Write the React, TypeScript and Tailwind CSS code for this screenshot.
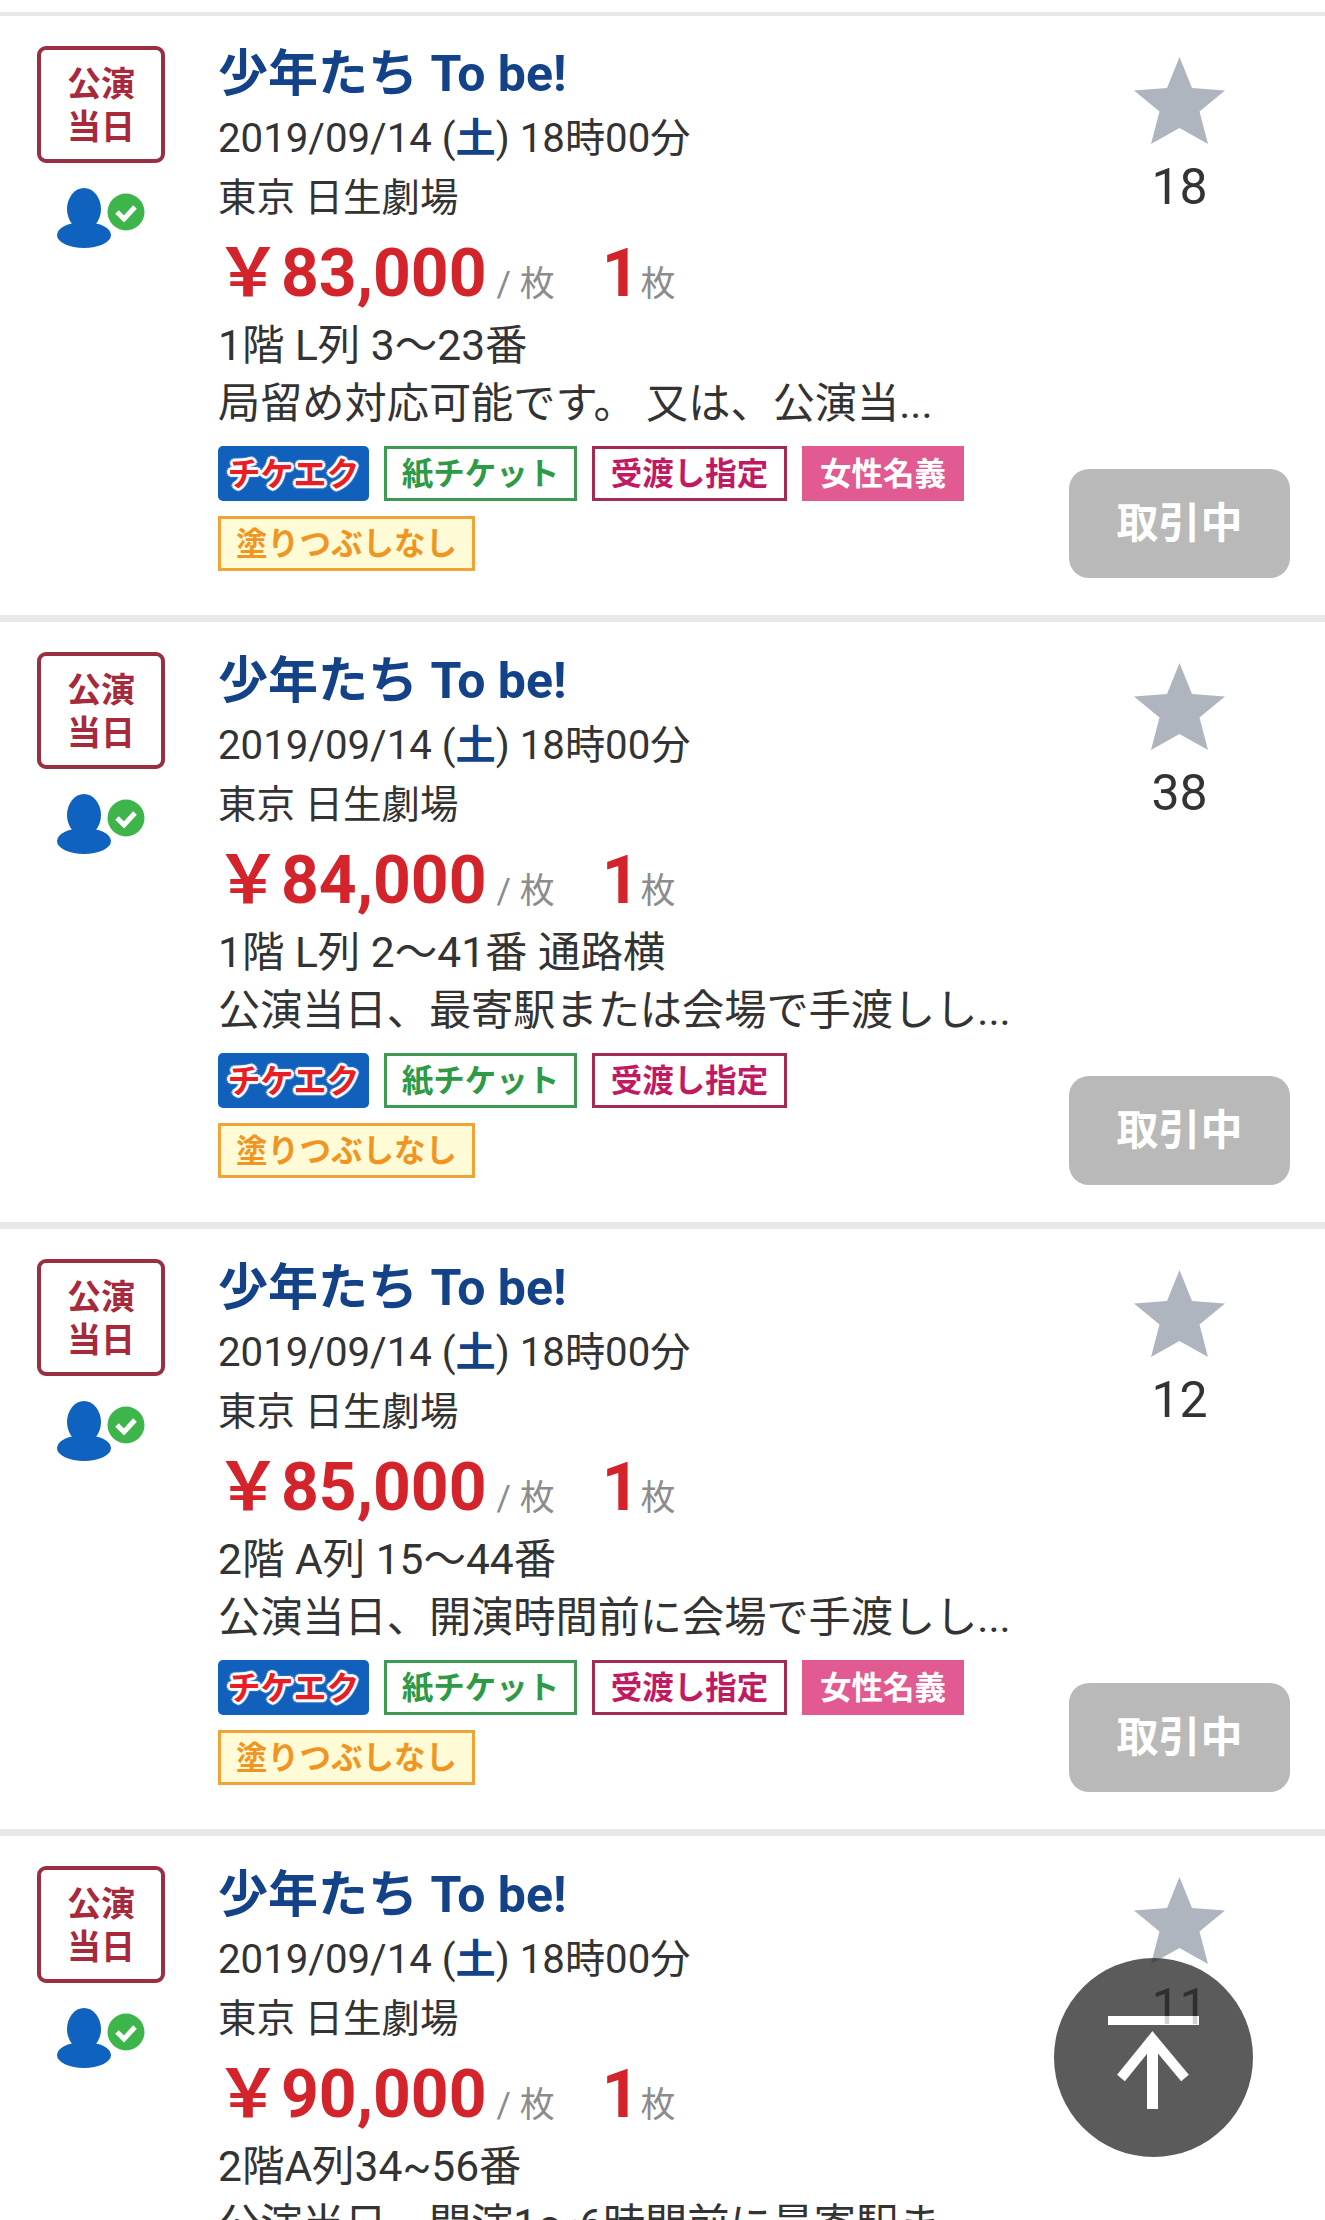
const listings = [
  { price: "83,000", seat: "1階 L列 3〜23番", note: "局留め対応可能です。 又は、公演当...", stars: 18, women: true },
  { price: "84,000", seat: "1階 L列 2〜41番 通路横", note: "公演当日、最寄駅または会場で手渡しし...", stars: 38, women: false },
  { price: "85,000", seat: "2階 A列 15〜44番", note: "公演当日、開演時間前に会場で手渡しし...", stars: 12, women: true },
  { price: "90,000", seat: "2階A列34~56番", note: "公演当日、開演1〜6時間前に最寄駅ま", stars: 11, women: false, noTags: true },
];

function PersonIcon() {
  return (
    <svg width="88" height="62" viewBox="0 0 88 62" fill="none" xmlns="http://www.w3.org/2000/svg">
      <ellipse cx="27" cy="21" rx="17" ry="21" fill="#0f62bd" />
      <ellipse cx="27" cy="47" rx="27" ry="13" fill="#0f62bd" />
      <circle cx="69" cy="24" r="18.500" fill="#3db54a" />
      <path d="M60 24l7 7 11-12" stroke="#fff" strokeWidth="5" fill="none" />
    </svg>
  );
}

function StarIcon() {
  return (
    <svg width="91" height="87" viewBox="0 0 91 87" xmlns="http://www.w3.org/2000/svg">
      <path d="M45.500 0L58 31L91 33.500L65.500 54.500L74 87L45.500 71L17 87L25.500 54.500L0 33.500L33 31Z" fill="#aeb5bf" />
    </svg>
  );
}

function TopIcon() {
  return (
    <svg width="91" height="93" viewBox="0 0 91 93" fill="none" xmlns="http://www.w3.org/2000/svg">
      <rect x="0" y="0" width="91" height="9" fill="#fff" />
      <rect x="39" y="22" width="11" height="71" fill="#fff" />
      <path d="M13 62L44.500 23L77 62" stroke="#fff" strokeWidth="10" />
    </svg>
  );
}

function Tag({ className, children }: { className: string; children: React.ReactNode }) {
  return (
    <span className={`flex h-[55px] items-center justify-center pt-[2px] leading-none font-bold ${className}`}>
      {children}
    </span>
  );
}

function Row({ item, first }: { item: (typeof listings)[number]; first: boolean }) {
  return (
    <section className={`flex bg-white border-t-[#e8e8e8] ${first ? "h-[603px] border-t-[4px]" : "h-[607px] border-t-[7px]"}`}>
      {/* badge + seller */}
      <div className="flex w-[218px] shrink-0 flex-col items-start pt-[30px] pl-[37px]">
        <div className="flex h-[117px] w-[128px] flex-col items-center justify-center rounded-[9px] border-[4px] border-[#9b2f42] pt-[3px] text-[34px] leading-[43px] font-bold text-[#a62a3c]">
          <span>公演</span>
          <span>当日</span>
        </div>
        <div className="mt-[25px] ml-[20px]">
          <PersonIcon />
        </div>
      </div>

      {/* ticket info */}
      <div className={`w-[832px] shrink-0 text-[42.500px] leading-[58px] text-[#333333] ${first ? "pt-[28px]" : "pt-[29px]"}`}>
        <h2 className="text-[50px] leading-[60px] font-bold text-[#134288]">少年たち To be!</h2>
        <p className="mt-[5px] text-[40.200px] leading-[59px]">
          2019/09/14 (<span className="font-semibold text-[#134288]">土</span>) 18時00分
        </p>
        <p className="text-[38.500px] leading-[59px]">東京 日生劇場</p>
        <div className="-ml-[3px] flex h-[90px] items-center pt-[4px]">
          <span className="text-[66px] leading-none font-bold text-[#d3242c]">￥{item.price}</span>
          <span className="mt-[20px] ml-[10px] text-[35px] leading-none text-[#8c8c8c]">/ 枚</span>
          <span className="ml-[47px] text-[66px] leading-none font-bold text-[#d3242c]">1</span>
          <span className="mt-[20px] ml-[1px] text-[35px] leading-none text-[#8c8c8c]">枚</span>
        </div>
        <p>{item.seat}</p>
        <p className="text-[42.200px]">{item.note}</p>
        {!item.noTags && (
          <div className="mt-[13px] flex flex-wrap gap-[15px]">
            <Tag className="w-[151px] rounded-[5px] bg-[#1160bb] text-[33px] font-black text-[#ea1c24] [text-shadow:3px_0_1px_#fff,-3px_0_1px_#fff,0_3px_1px_#fff,0_-3px_1px_#fff,2px_2px_1px_#fff,-2px_-2px_1px_#fff,2px_-2px_1px_#fff,-2px_2px_1px_#fff]">
              チケエク
            </Tag>
            <Tag className="w-[193px] border-[3px] border-[#3e9a50] bg-white text-[31.500px] text-[#2f9a45]">紙チケット</Tag>
            <Tag className="w-[195px] border-[3px] border-[#a52a52] bg-white text-[31.500px] text-[#c01a62]">受渡し指定</Tag>
            {item.women && <Tag className="w-[162px] bg-[#e25a92] text-[31.500px] text-white">女性名義</Tag>}
            <Tag className="w-[257px] border-[3px] border-[#f0a336] bg-[#fffbd6] text-[31.500px] text-[#f09522]">塗りつぶしなし</Tag>
          </div>
        )}
      </div>

      {/* favourites + status */}
      <div className="ml-[19px] flex w-[221px] shrink-0 flex-col items-center pt-[41px] pb-[37px]">
        <StarIcon />
        <span className="mt-[13px] text-[50px] leading-[60px] text-[#333333]">{item.stars}</span>
        {!item.noTags && (
          <div className="mt-auto flex h-[109px] w-full items-center justify-center rounded-[20px] bg-[#b9b9b9] text-[42px] font-bold text-white">
            取引中
          </div>
        )}
      </div>
    </section>
  );
}

export default function App() {
  return (
    <div className="relative h-[2220px] overflow-hidden bg-white pt-[12px] font-['Roboto','Noto_Sans_CJK_JP',sans-serif]">
      {listings.map((item, i) => (
        <Row key={item.price} item={item} first={i === 0} />
      ))}

      {/* back to top */}
      <button className="absolute top-[1958px] left-[1054px] flex h-[199px] w-[199px] items-start justify-center rounded-full bg-[#2e2e2e] pt-[58px] opacity-[.78]">
        <TopIcon />
      </button>
    </div>
  );
}
